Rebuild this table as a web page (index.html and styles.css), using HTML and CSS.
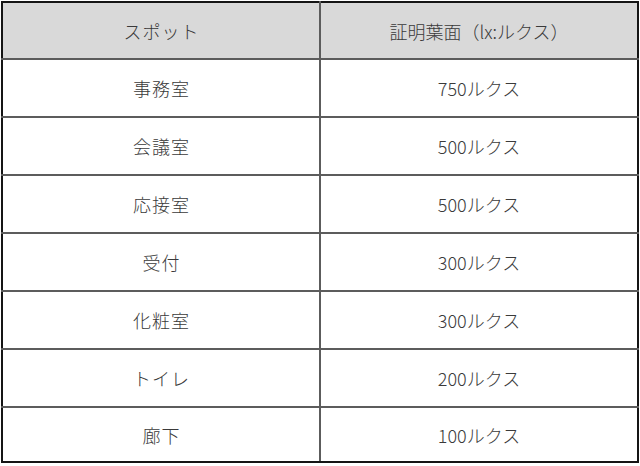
FILE: index.html
```html
<!DOCTYPE html>
<html lang="ja">
<head>
<meta charset="utf-8">
<link rel="stylesheet" href="styles.css">
</head>
<body>
<table class="lux">
  <thead>
    <tr><th class="spot">スポット</th><th>証明葉面（lx:ルクス）</th></tr>
  </thead>
  <tbody>
    <tr><td class="spot">事務室</td><td>750ルクス</td></tr>
    <tr><td class="spot">会議室</td><td>500ルクス</td></tr>
    <tr><td class="spot">応接室</td><td>500ルクス</td></tr>
    <tr><td class="spot">受付</td><td>300ルクス</td></tr>
    <tr><td class="spot">化粧室</td><td>300ルクス</td></tr>
    <tr><td class="spot">トイレ</td><td>200ルクス</td></tr>
    <tr class="last"><td class="spot">廊下</td><td>100ルクス</td></tr>
  </tbody>
</table>
</body>
</html>
```

FILE: styles.css
```css
html, body {
  margin: 0;
  padding: 0;
  background: #ffffff;
}
body {
  padding: 1px 1px 0 1px;
  font-family: "Noto Sans CJK JP", "Noto Sans", sans-serif;
  color: #3a3a3a;
}
.lux {
  width: 638px;
  border-collapse: collapse;
  border: 2px solid #151515;
  table-layout: fixed;
}
.lux th, .lux td {
  height: 56px;
  padding: 0;
  border: 2px solid #5c5c5c;
  text-align: center;
  vertical-align: middle;
  font-size: 18px;
  font-weight: 300;
  line-height: 1;
}
.lux th {
  background: #d9d9d9;
  height: 55px;
}
.lux .spot {
  letter-spacing: 1px;
  text-indent: 1px;
}
.lux .last td {
  height: 53px;
}
.lux tr > :first-child { border-left: 2px solid #151515; }
.lux tr > :last-child { border-right: 2px solid #151515; }
.lux thead th { border-top: 2px solid #151515; }
.lux tbody tr:last-child td { border-bottom: 2px solid #151515; }
```
